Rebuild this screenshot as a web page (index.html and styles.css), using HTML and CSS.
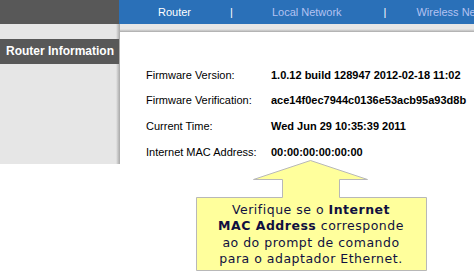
FILE: index.html
```html
<!DOCTYPE html>
<html>
<head>
  <title>Router Information</title>
  <link rel="stylesheet" href="styles.css">
</head>
<body>
<div class="topbar">
  <div class="brand"></div>
  <ul class="nav">
    <li class="current">Router</li>
    <li class="sep">|</li>
    <li class="wide">Local Network</li>
    <li class="sep narrow">|</li>
    <li>Wireless Network</li>
  </ul>
</div>
<div class="main">
  <div class="sidebar">
    <h1 class="section-title">Router Information</h1>
  </div>
  <div class="content">
    <table class="info">
      <tr><td class="label">Firmware Version:</td><td class="value">1.0.12 build 128947 2012-02-18 11:02</td></tr>
      <tr><td class="label">Firmware Verification:</td><td class="value">ace14f0ec7944c0136e53acb95a93d8b</td></tr>
      <tr><td class="label">Current Time:</td><td class="value">Wed Jun 29 10:35:39 2011</td></tr>
      <tr><td class="label">Internet MAC Address:</td><td class="value">00:00:00:00:00:00</td></tr>
    </table>
  </div>
</div>
<div class="callout">
  <svg class="callout-shape" width="240" height="116" viewBox="190 158 240 116">
    <path d="M310.5 160.5 L367.5 179.5 L339.5 179.5 L339.5 197.5 L426.5 197.5 L426.5 270.5 L196.5 270.5 L196.5 197.5 L282.5 197.5 L282.5 179.5 L253.5 179.5 Z" fill="#ffff9c" stroke="#b8b8b8" stroke-width="1"/>
  </svg>
  <p class="callout-text">Verifique se o <b>Internet</b><br><b>MAC Address</b> corresponde<br>ao do prompt de comando<br>para o adaptador Ethernet.</p>
</div>
</body>
</html>
```

FILE: styles.css
```css
body {
  margin: 0;
  padding: 0;
  background: #fff;
  font-family: "Liberation Sans", Arial, sans-serif;
  font-size: 11px;
  overflow: hidden;
}
.topbar {
  display: flex;
  height: 24px;
}
.brand {
  width: 119px;
  background: #585858;
}
.nav {
  flex: 1;
  display: flex;
  align-items: center;
  margin: 0;
  padding: 0 0 0 39px;
  list-style: none;
  background: #2a70b8;
  color: #b4c2f2;
  white-space: nowrap;
  overflow: hidden;
}
.nav li {
  margin-right: 39px;
}
.nav .wide {
  margin-right: 42px;
}
.nav .narrow {
  margin-right: 30px;
}
.nav .current,
.nav .sep {
  color: #fff;
}
.main {
  display: grid;
  grid-template-columns: 120px 1fr;
}
.sidebar {
  height: 140px;
  padding-top: 15px;
  box-sizing: border-box;
  background: linear-gradient(to right, #e6e6e6 0, #e6e6e6 116px, #c4c4c4 118px, #a8a8a8 120px);
}
.section-title {
  margin: 0;
  width: 119px;
  height: 25px;
  line-height: 25px;
  padding-left: 6px;
  box-sizing: border-box;
  background: #585858;
  color: #fff;
  font-size: 12px;
  font-weight: bold;
  white-space: nowrap;
}
.content {
  padding: 38px 0 0 22px;
  background: linear-gradient(to bottom, #e6e6e6 0, #e6e6e6 5px, #c0c0c0 7px, #a8a8a8 8px, #fff 8px);
}
.info {
  border-collapse: collapse;
}
.info td {
  height: 25.6px;
  padding: 0 4px;
  white-space: nowrap;
  color: #000;
}
.info .label {
  width: 117px;
}
.info .value {
  font-weight: bold;
}
.callout {
  position: absolute;
  left: 190px;
  top: 158px;
  width: 240px;
  height: 116px;
}
.callout-shape {
  display: block;
}
.callout-text {
  position: absolute;
  left: 8px;
  top: 44px;
  width: 226px;
  margin: 0;
  text-align: center;
  font-family: "DejaVu Sans", Verdana, sans-serif;
  font-size: 12.5px;
  letter-spacing: 0.5px;
  line-height: 16.4px;
  color: #101040;
}
```
